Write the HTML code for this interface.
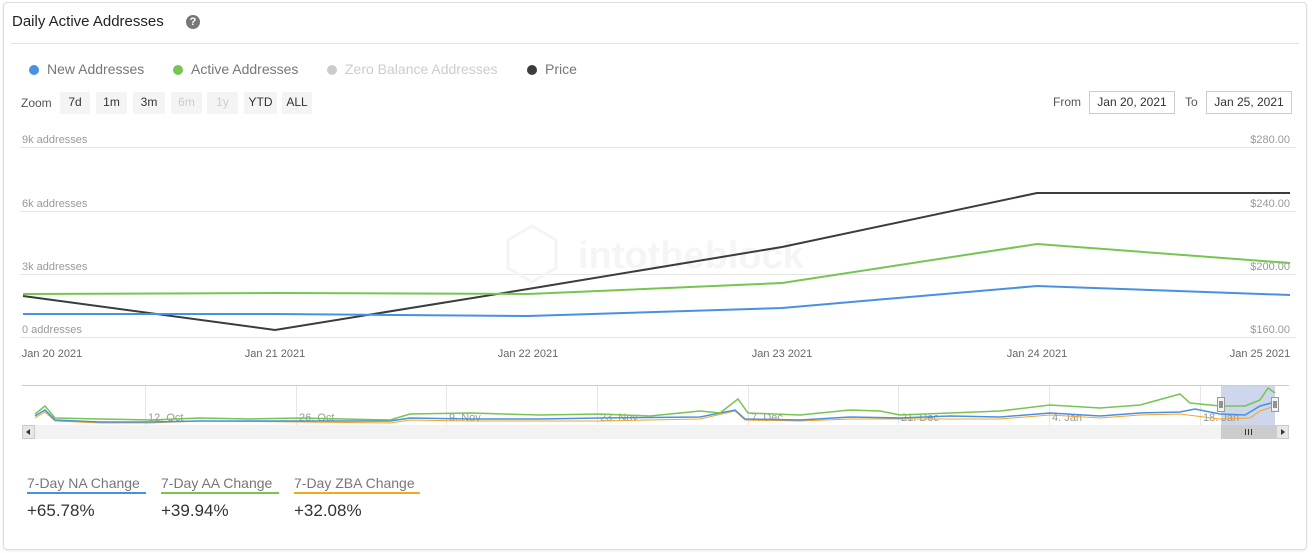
<!DOCTYPE html>
<html><head><style>
body{margin:0;width:1312px;height:553px;background:#fff;font-family:"Liberation Sans",sans-serif;position:relative;overflow:hidden}
.card{position:absolute;left:3px;top:2px;width:1302px;height:546px;border:1px solid #ddd;border-radius:4px;box-shadow:0 1px 2px rgba(0,0,0,.08)}
.abs{position:absolute;white-space:nowrap}
.btn{position:absolute;top:92px;height:22px;line-height:21px;font-size:12px;background:#f4f4f4;color:#333;text-align:center;border-radius:2px}
.dis{color:#ccc}
.ax{font-size:11px;color:#999}
.leg{font-size:14px;color:#777;top:61px}
.dot{display:inline-block;width:10px;height:10px;border-radius:5px;margin-right:8px;vertical-align:-1px}
.dbox{position:absolute;top:91px;height:21px;border:1px solid #ccc;font-size:12px;line-height:21px;text-align:center;color:#333}
</style></head><body>
<div class="card"></div>
<div class="abs" style="left:12px;top:13px;font-size:15px;color:#222">Daily Active Addresses</div>
<div class="abs" style="left:186px;top:15px;width:14px;height:14px;border-radius:7px;background:#777;color:#fff;font-size:11px;font-weight:bold;text-align:center;line-height:14px">?</div>
<div class="abs" style="left:11px;top:43px;width:1288px;height:1px;background:#e3e3e3"></div>
<div class="abs leg" style="left:29px"><span class="dot" style="background:#4a90e2"></span>New Addresses</div>
<div class="abs leg" style="left:173px"><span class="dot" style="background:#76c551"></span>Active Addresses</div>
<div class="abs leg" style="left:327px;color:#ccc"><span class="dot" style="background:#ccc"></span>Zero Balance Addresses</div>
<div class="abs leg" style="left:527px"><span class="dot" style="background:#3a3c40"></span>Price</div>
<div class="abs" style="left:21px;top:96px;font-size:12px;color:#555">Zoom</div>
<div class="btn" style="left:60px;width:30px">7d</div>
<div class="btn" style="left:96px;width:31px">1m</div>
<div class="btn" style="left:133px;width:32px">3m</div>
<div class="btn dis" style="left:171px;width:31px">6m</div>
<div class="btn dis" style="left:207px;width:31px">1y</div>
<div class="btn" style="left:244px;width:33px">YTD</div>
<div class="btn" style="left:282px;width:30px">ALL</div>
<div class="abs" style="left:1053px;top:95px;font-size:12px;color:#555">From</div>
<div class="dbox" style="left:1089px;width:84px">Jan 20, 2021</div>
<div class="abs" style="left:1185px;top:95px;font-size:12px;color:#555">To</div>
<div class="dbox" style="left:1206px;width:84px">Jan 25, 2021</div>
<div class="abs ax" style="left:22px;top:134px">9k addresses</div>
<div class="abs ax" style="left:22px;top:198px">6k addresses</div>
<div class="abs ax" style="left:22px;top:261px">3k addresses</div>
<div class="abs ax" style="left:22px;top:324px">0 addresses</div>
<div class="abs ax" style="right:22px;top:134px">$280.00</div>
<div class="abs ax" style="right:22px;top:198px">$240.00</div>
<div class="abs ax" style="right:22px;top:261px">$200.00</div>
<div class="abs ax" style="right:22px;top:324px">$160.00</div>
<div class="abs" style="left:578px;top:235px;font-size:38px;color:#f5f5f5;font-weight:bold">intotheblock</div>
<svg class="abs" style="left:0;top:0" width="1312" height="553">
<g stroke="#e6e6e6" stroke-width="1">
<line x1="20" y1="147.5" x2="1296" y2="147.5"/><line x1="20" y1="211.5" x2="1296" y2="211.5"/><line x1="20" y1="274.5" x2="1296" y2="274.5"/><line x1="20" y1="337.5" x2="1296" y2="337.5"/>
</g>
<polygon points="508,240 532,226 556,240 556,268 532,282 508,268" fill="none" stroke="#f4f4f4" stroke-width="3"/>
<polyline fill="none" stroke="#3a3c40" stroke-width="2" points="23,296 275,330 528,289 782,247 1037,193 1290,193"/>
<polyline fill="none" stroke="#76c551" stroke-width="2" points="23,294 275,293 528,294 782,283 1037,244 1290,263"/>
<polyline fill="none" stroke="#4a90e2" stroke-width="2" points="23,314 275,314 528,316 782,308 1037,286 1290,295"/>
<g font-size="11" fill="#666" font-family="Liberation Sans" text-anchor="middle">
<text x="52" y="357">Jan 20 2021</text><text x="275" y="357">Jan 21 2021</text><text x="528" y="357">Jan 22 2021</text><text x="782" y="357">Jan 23 2021</text><text x="1037" y="357">Jan 24 2021</text><text x="1260" y="357">Jan 25 2021</text>
</g>
<line x1="22" y1="385.5" x2="1289" y2="385.5" stroke="#ccc"/>
<g stroke="#e6e6e6"><line x1="145.5" y1="386" x2="145.5" y2="425"/><line x1="296.5" y1="386" x2="296.5" y2="425"/><line x1="446.5" y1="386" x2="446.5" y2="425"/><line x1="597.5" y1="386" x2="597.5" y2="425"/><line x1="748.5" y1="386" x2="748.5" y2="425"/><line x1="898.5" y1="386" x2="898.5" y2="425"/><line x1="1049.5" y1="386" x2="1049.5" y2="425"/><line x1="1200.5" y1="386" x2="1200.5" y2="425"/></g>
<rect x="1221" y="386" width="54" height="39" fill="#cdd6ea"/>
<g font-size="11" fill="#999" font-family="Liberation Sans"><text x="148" y="421">12. Oct</text><text x="299" y="421">26. Oct</text><text x="449" y="421">9. Nov</text><text x="600" y="421">23. Nov</text><text x="751" y="421">7. Dec</text><text x="901" y="421">21. Dec</text><text x="1052" y="421">4. Jan</text><text x="1203" y="421">18. Jan</text></g>
<polyline fill="none" stroke="#f5a623" stroke-width="1" points="35,418 45,412 55,421 100,423 150,423 200,421 300,422 390,423 410,420 470,421 540,421 600,421 700,419 735,411 745,420 800,421 850,419 900,419 1000,419 1050,415 1100,418 1140,415 1180,414 1220,419 1250,418 1260,411 1275,406"/>
<polyline fill="none" stroke="#4a90e2" stroke-width="1.5" points="35,416 45,410 55,420 100,422 150,422 200,421 300,421 390,421 410,418 470,419 540,419 600,418 700,417 735,410 745,419 800,420 850,417 900,418 950,416 1000,417 1050,413 1100,416 1140,413 1180,412 1195,409 1220,414 1245,415 1260,406 1275,402"/>
<polyline fill="none" stroke="#76c551" stroke-width="1.5" points="35,414 45,406 55,418 100,419 150,420 200,418 250,419 300,418 390,420 410,414 470,413 540,415 600,414 650,416 700,411 720,413 738,399 748,413 800,415 850,410 880,411 900,415 950,413 1000,411 1050,405 1100,408 1140,405 1180,394 1190,403 1220,406 1245,406 1260,400 1268,388 1275,393"/>
<rect x="1217.5" y="397.5" width="7" height="14" fill="#f2f2f2" stroke="#999"/><line x1="1220" y1="401" x2="1220" y2="408" stroke="#333"/><line x1="1222" y1="401" x2="1222" y2="408" stroke="#333"/>
<rect x="1271.5" y="397.5" width="7" height="14" fill="#f2f2f2" stroke="#999"/><line x1="1274" y1="401" x2="1274" y2="408" stroke="#333"/><line x1="1276" y1="401" x2="1276" y2="408" stroke="#333"/>
<rect x="22" y="425" width="1267" height="14" fill="#f2f2f2"/>
<rect x="22.5" y="425.5" width="12" height="13" fill="#e6e6e6" stroke="#ccc"/><path d="M26 432 L30 429 L30 435Z" fill="#333"/>
<rect x="1221" y="425" width="55" height="14" fill="#ccc"/>
<g stroke="#333"><line x1="1245.5" y1="429" x2="1245.5" y2="435"/><line x1="1248.5" y1="429" x2="1248.5" y2="435"/><line x1="1251.5" y1="429" x2="1251.5" y2="435"/></g>
<rect x="1276.5" y="425.5" width="12" height="13" fill="#e6e6e6" stroke="#ccc"/><path d="M1285 432 L1281 429 L1281 435Z" fill="#333"/>
</svg>
<div class="abs" style="left:27px;top:475px;font-size:14px;color:#777">7-Day NA Change</div>
<div class="abs" style="left:27px;top:492px;width:119px;height:2px;background:#4a90e2"></div>
<div class="abs" style="left:161px;top:475px;font-size:14px;color:#777">7-Day AA Change</div>
<div class="abs" style="left:161px;top:492px;width:118px;height:2px;background:#76c551"></div>
<div class="abs" style="left:294px;top:475px;font-size:14px;color:#777">7-Day ZBA Change</div>
<div class="abs" style="left:294px;top:492px;width:126px;height:2px;background:#f5a623"></div>
<div class="abs" style="left:27px;top:501px;font-size:17px;color:#333">+65.78%</div>
<div class="abs" style="left:161px;top:501px;font-size:17px;color:#333">+39.94%</div>
<div class="abs" style="left:294px;top:501px;font-size:17px;color:#333">+32.08%</div>
</body></html>
